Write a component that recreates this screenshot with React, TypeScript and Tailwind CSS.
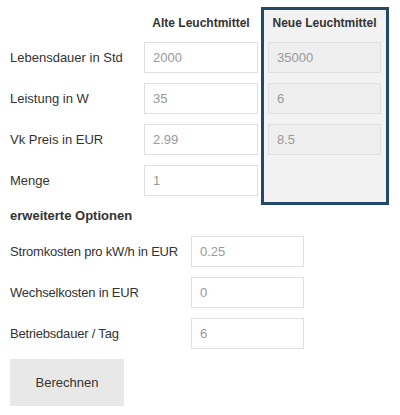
import React from "react";

const font = { fontFamily: '"Liberation Sans", Arial, sans-serif' };

function Field({ value, alt }: { value: string; alt?: boolean }) {
  return (
    <div
      className={`h-[31px] w-full flex items-center pl-[8px] text-[13px] text-[#999] border border-[#e0e0e0] ${
        alt ? "bg-[#efefef]" : "bg-white"
      }`}
    >
      {value}
    </div>
  );
}

export default function App() {
  const rows = [
    { label: "Lebensdauer in Std", a: "2000", n: "35000" },
    { label: "Leistung in W", a: "35", n: "6" },
    { label: "Vk Preis in EUR", a: "2.99", n: "8.5" },
    { label: "Menge", a: "1" },
  ];
  const extra = [
    { label: "Stromkosten pro kW/h in EUR", v: "0.25" },
    { label: "Wechselkosten in EUR", v: "0" },
    { label: "Betriebsdauer / Tag", v: "6" },
  ];
  return (
    <div className="w-[400px] h-[415px] bg-white text-[#333]" style={font}>
      <div className="flex pl-[10px] pt-[7px]">
        <div className="flex flex-col w-[134px] pt-[3px]">
          <div className="h-[26px] mb-[6px]" />
          <div className="flex flex-col gap-[10px]">
            {rows.map((r) => (
              <div key={r.label} className="h-[31px] flex items-center text-[13px]">
                {r.label}
              </div>
            ))}
          </div>
        </div>
        <div className="flex flex-col w-[114px] pt-[3px]">
          <div className="h-[26px] mb-[6px] flex items-center justify-center text-[12px] font-bold">
            Alte Leuchtmittel
          </div>
          <div className="flex flex-col gap-[10px]">
            {rows.map((r) => (
              <Field key={r.label} value={r.a} />
            ))}
          </div>
        </div>
        <div className="ml-[3px] w-[128px] h-[198px] border-[3px] border-[#24496a] bg-[#f2f2f2] flex flex-col pl-[4px] pr-[5px]">
          <div className="h-[26px] mb-[6px] flex items-center justify-center text-[12px] font-bold">
            Neue Leuchtmittel
          </div>
          <div className="flex flex-col gap-[10px]">
            {rows
              .filter((r) => r.n)
              .map((r) => (
                <Field key={r.label} value={r.n as string} alt />
              ))}
          </div>
        </div>
      </div>
      <div className="pl-[10px]">
        <div className="h-[16px] mt-[3px] flex items-center text-[13px] font-bold">
          erweiterte Optionen
        </div>
        <div className="flex flex-col gap-[10px] mt-[12px]">
          {extra.map((e) => (
            <div key={e.label} className="flex items-center">
              <div className="w-[181px] text-[13px] tracking-[-0.2px]">{e.label}</div>
              <div className="w-[113px]">
                <Field value={e.v} />
              </div>
            </div>
          ))}
        </div>
        <button className="mt-[10px] w-[114px] h-[47px] bg-[#e8e8e8] text-[13px] text-[#333] flex items-center justify-center">
          Berechnen
        </button>
      </div>
    </div>
  );
}
